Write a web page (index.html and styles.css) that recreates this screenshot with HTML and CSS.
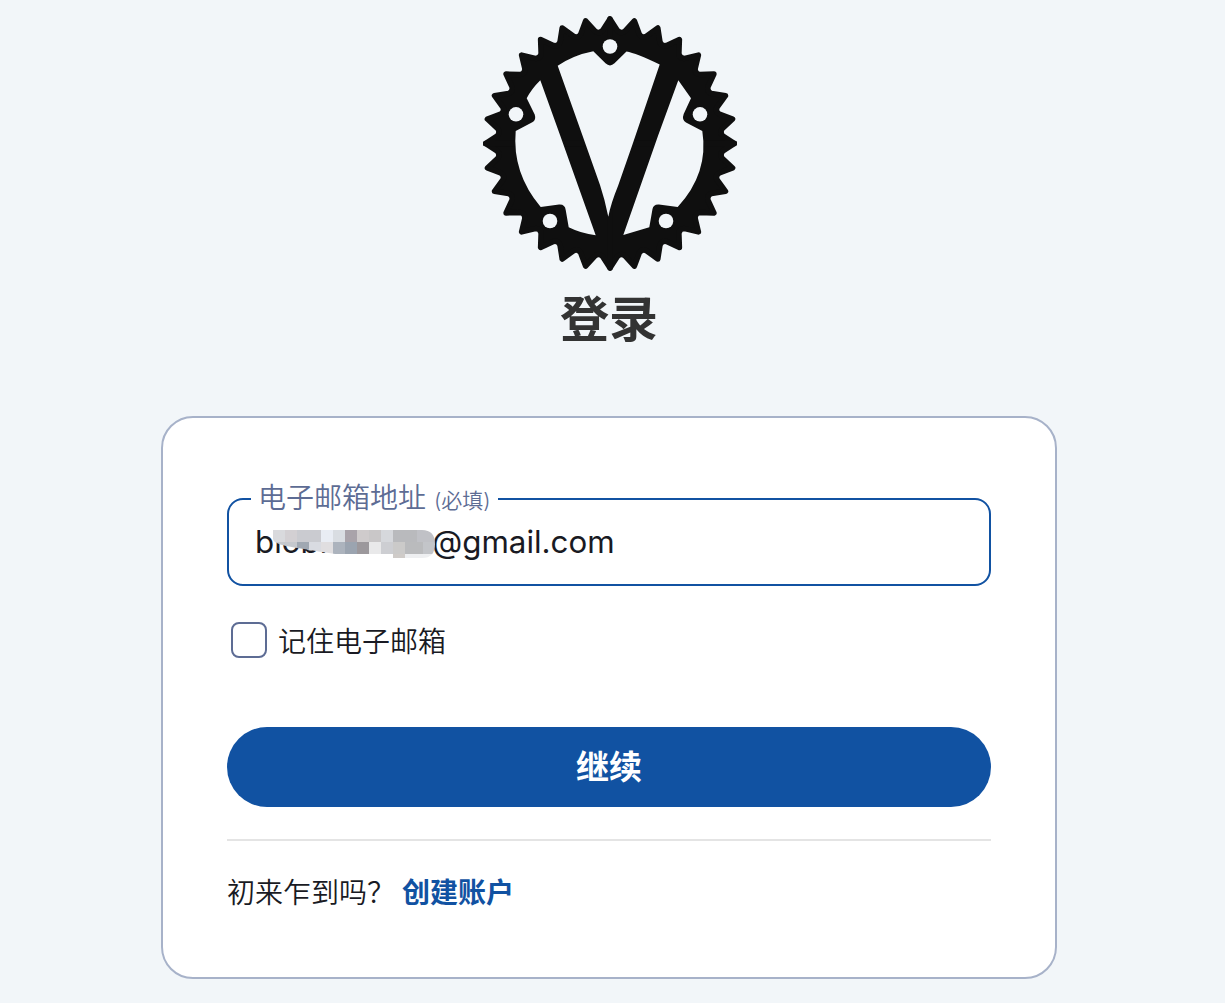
FILE: index.html
```html
<!DOCTYPE html>
<html lang="zh-CN">
<head>
    <meta charset="UTF-8">
    <meta name="viewport" content="width=device-width, initial-scale=1.0">
    <title>登录</title>
    <link rel="stylesheet" href="styles.css">
</head>
<body>
    <main class="login">
        <svg class="logo" viewBox="0 0 254 255" aria-hidden="true">
            <defs>
                <!-- a quarter of the gear: eight teeth -->
                <path id="teeth" d="M0 0V-124.5L7.4 -113Q11 -109.5 14.8 -112.2L24.4 -122.6L29.3 -109.4Q32 -105 36.4 -107.2L47.8 -115.5L50 -101.5Q51.7 -96.8 56.6 -98L69.4 -103.9L68.9 -89.8Q69.7 -85 74.7 -85.1L88.4 -88.4L85.1 -74.7Q85 -69.7 89.8 -68.9L103.9 -69.4L98 -56.6Q96.8 -51.7 101.5 -50L115.5 -47.8L107.2 -36.4Q105 -32 109.4 -29.3L122.6 -24.4L112.2 -14.8Q109.5 -11 113 -7.4L124.5 0Z"/>
            </defs>
            <g class="gear" transform="translate(127 127.5)">
                <use href="#teeth"/>
                <use href="#teeth" transform="rotate(90)"/>
                <use href="#teeth" transform="rotate(180)"/>
                <use href="#teeth" transform="rotate(270)"/>
            </g>
            <g class="gap">
                <path d="M74.7 49.7Q91 39 110.3 35.3L122.5 47.3Q127 51.5 131.5 47.3L143.5 35.5Q153 37 176.7 48.5L149.3 129L135 170Q128 187 125.3 200.7Q122 184 117 169L99.3 119Z"/>
                <path d="M57.3 64.3Q48.5 73 43.7 82.3L51.7 98.5Q53.5 104 49.3 106.3L32.7 115Q29 157 57.7 191L76 188.5Q82 188 82.7 194L85.7 211.3Q98 217.5 112.7 219.3L77 119Z"/>
                <path d="M195.3 64.3L208 82.3L200.7 98Q198.5 104 203 106.5L219.3 115Q226 157 194.7 191L176 188.5Q170.5 188 169.5 193L166.3 211.3L140.3 219L175.3 119Z"/>
                <circle cx="127" cy="30.5" r="7.3"/>
                <circle cx="33" cy="98.3" r="7.3"/>
                <circle cx="217" cy="98.3" r="7.3"/>
                <circle cx="67" cy="205" r="7.3"/>
                <circle cx="183" cy="205" r="7.3"/>
            </g>
        </svg>
        <h1>登录</h1>

        <form class="card">
            <fieldset class="field">
                <legend>电子邮箱地址 <small>(必填)</small></legend>
                <div class="email">
                    <span class="name">blobr
                        <svg class="mosaic" viewBox="0 0 162 28" aria-hidden="true">
                            <clipPath id="smear"><path d="M0 0H149Q162 0 162 14Q162 28 149 28H120V24H62Q30 19 13 16Q0 13 0 9Z"/></clipPath>
                            <g clip-path="url(#smear)" shape-rendering="crispEdges">
                                <rect width="12" height="12" fill="#d9dadd"/>
                                <rect x="12" width="12" height="12" fill="#d3d0d3"/>
                                <rect x="24" width="24" height="12" fill="#cacbd0"/>
                                <rect x="48" width="12" height="12" fill="#e9edf4"/>
                                <rect x="60" width="12" height="12" fill="#d9dde2"/>
                                <rect x="72" width="12" height="12" fill="#a9a3aa"/>
                                <rect x="84" width="12" height="12" fill="#cfcbcc"/>
                                <rect x="96" width="12" height="12" fill="#c9c7c8"/>
                                <rect x="108" width="12" height="12" fill="#d6d8dc"/>
                                <rect x="120" width="24" height="12" fill="#b9babd"/>
                                <rect x="144" width="18" height="12" fill="#c0c1c6"/>
                                <rect y="12" width="24" height="12" fill="#c5c8cd"/>
                                <rect x="24" y="12" width="12" height="12" fill="#a0a8b2"/>
                                <rect x="36" y="12" width="12" height="12" fill="#d9dbe1"/>
                                <rect x="48" y="12" width="12" height="12" fill="#e0dee0"/>
                                <rect x="60" y="12" width="12" height="12" fill="#acb3bd"/>
                                <rect x="72" y="12" width="12" height="12" fill="#9ba4b0"/>
                                <rect x="84" y="12" width="12" height="12" fill="#9c989c"/>
                                <rect x="96" y="12" width="12" height="12" fill="#e9e9ea"/>
                                <rect x="108" y="12" width="12" height="12" fill="#cdced2"/>
                                <rect x="120" y="12" width="12" height="12" fill="#cbcac9"/>
                                <rect x="132" y="12" width="18" height="12" fill="#babbbd"/>
                                <rect x="150" y="12" width="12" height="12" fill="#c3c5c9"/>
                                <rect x="120" y="24" width="12" height="4" fill="#cfcbc8"/>
                                <rect x="132" y="24" width="30" height="4" fill="#eeeff1"/>
                            </g>
                        </svg>
                    </span>
                    <span class="domain">@gmail.com</span>
                </div>
            </fieldset>

            <label class="remember">
                <input type="checkbox">
                <span>记住电子邮箱</span>
            </label>

            <button type="button" class="submit">继续</button>

            <p class="signup">初来乍到吗？<a href="#">创建账户</a></p>
        </form>
    </main>
</body>
</html>
```

FILE: styles.css
```css
* {
    box-sizing: border-box;
}

body {
    margin: 0;
    min-height: 1003px;
    background: #f2f6f9;
    color: #191a23;
    font-family: Inter, "Noto Sans CJK SC", sans-serif;
    font-size: 28px;
}

.login {
    display: flex;
    flex-direction: column;
    align-items: center;
    width: 1218px;
    padding-top: 16px;
}

.logo {
    width: 254px;
    height: 255px;
    margin-left: 2px;
}

.gear {
    fill: #0f0f0f;
    stroke: #0f0f0f;
    stroke-width: 5.5;
    stroke-linejoin: round;
}

.gap {
    fill: #f2f6f9;
}

h1 {
    margin: 17px 0 64px;
    color: #333;
    font-size: 49px;
    line-height: 64px;
}

.card {
    width: 896px;
    height: 563px;
    padding: 64px 64px 0;
    background: #fff;
    border: 2px solid #a7b2c9;
    border-radius: 32px;
}

/* Email field with the label sitting in its border */
.field {
    height: 104px;
    margin: 0;
    padding: 0 26px 0 22px;
    border: 2px solid #1152a2;
    border-radius: 16px;
}

legend {
    height: 34px;
    padding: 0 7px;
    color: #5d6c94;
    font-weight: 350;
    line-height: 32px;
    white-space: nowrap;
}

legend small {
    font-size: 21px;
}

.email {
    display: flex;
    padding-left: 4px;
    font-size: 31.3px;
    font-weight: 370;
    line-height: 53px;
}

.name {
    position: relative;
    width: 177px;
}

.mosaic {
    position: absolute;
    left: 18px;
    top: 14px;
    width: 162px;
    height: 28px;
}

.remember {
    display: flex;
    align-items: center;
    gap: 11px;
    height: 36px;
    margin: 36px 0 0 4px;
    font-weight: 350;
}

.remember input {
    appearance: none;
    width: 36px;
    height: 36px;
    margin: 0;
    border: 2px solid #5d6c94;
    border-radius: 8px;
}

.submit {
    display: block;
    width: 100%;
    height: 80px;
    margin: 69px 0 32px;
    padding: 0 0 4px;
    border: 0;
    border-radius: 40px;
    background: #1152a2;
    color: #fff;
    font: bold 33px "Noto Sans CJK SC", sans-serif;
}

.signup {
    margin: 0;
    padding-top: 31px;
    border-top: 2px solid #e4e4e4;
    font-weight: 350;
    line-height: 42px;
}

.signup a {
    margin-left: 7px;
    color: #1152a2;
    font-weight: bold;
    text-decoration: none;
}
```
